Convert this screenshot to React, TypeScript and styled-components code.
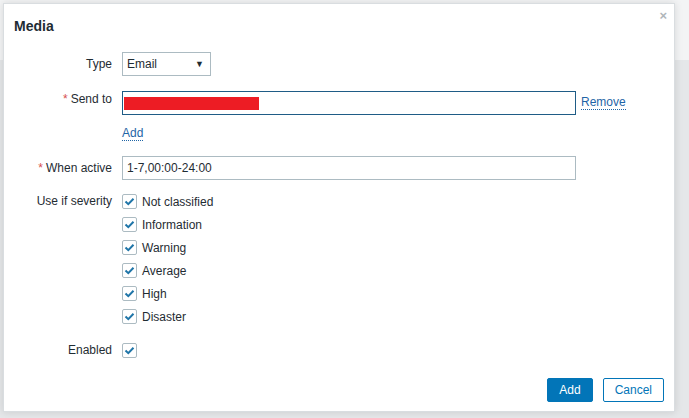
import React from "react"
import styled, { createGlobalStyle } from "styled-components"

const GlobalStyle = createGlobalStyle`
  html, body {
    margin: 0;
    padding: 0;
  }
  body {
    width: 689px;
    height: 418px;
    overflow: hidden;
    font-family: "Liberation Sans", Arial, sans-serif;
    font-size: 12px;
    color: #1f2c33;
    background: linear-gradient(#f3f4f5 0, #f3f4f5 60px, #e5e7e9 60px);
  }
`

const severities = [
  "Not classified",
  "Information",
  "Warning",
  "Average",
  "High",
  "Disaster",
]

const Page = styled.div`
  padding: 3px 0 0 3px;
`

const Dialog = styled.div`
  box-sizing: border-box;
  width: 672px;
  height: 409px;
  background: #fff;
  border: 1px solid #d9dde0;
  box-shadow: 0 0 8px rgba(0, 0, 0, 0.12);
  display: flex;
  flex-direction: column;
`

const Header = styled.div`
  display: flex;
  justify-content: space-between;
  align-items: flex-start;
  padding: 13px 10px 0 10px;
  height: 48px;
  box-sizing: border-box;
`

const Title = styled.h4`
  margin: 0;
  font-size: 14px;
  font-weight: bold;
  color: #1f2c33;
  line-height: 18px;
`

const Close = styled.span`
  color: #b0b6ba;
  font-size: 13px;
  line-height: 10px;
  margin-top: -6px;
  margin-right: -3px;
  font-weight: bold;
`

const Form = styled.div`
  flex: 1;
  padding: 0 10px;
`

const Row = styled.div<{ $gap?: number }>`
  display: grid;
  grid-template-columns: 98px 1fr;
  column-gap: 10px;
  margin-top: ${p => p.$gap ?? 0}px;
`

const Label = styled.div<{ $pad?: number }>`
  text-align: right;
  padding-top: ${p => p.$pad ?? 5}px;
  line-height: 14px;
  white-space: nowrap;
`

const Star = styled.span`
  color: #d64e4e;
  margin-right: 3px;
`

const Field = styled.div`
  display: flex;
  align-items: center;
`

const LinkField = styled(Field)`
  height: 24px;
`

const Select = styled.div`
  box-sizing: border-box;
  width: 89px;
  height: 24px;
  border: 1px solid #acbbc2;
  display: flex;
  align-items: center;
  justify-content: space-between;
  padding: 0 6px 0 4px;
  font-size: 12px;
`

const Arrow = styled.span`
  font-size: 9px;
  color: #1f2c33;
`

const Input = styled.div<{ $focus?: boolean }>`
  box-sizing: border-box;
  width: 454px;
  height: 24px;
  border: 1px solid ${p => (p.$focus ? "#1f5c86" : "#acbbc2")};
  padding: 0 4px;
  display: flex;
  align-items: center;
`

const Redact = styled.div`
  width: 135px;
  height: 13px;
  background: #ed1c24;
  margin-left: -3px;
  margin-top: 1px;
`

const Link = styled.span`
  color: #1f65a6;
  border-bottom: 1px dotted #1f65a6;
  line-height: 13px;
`

const RemoveLink = styled(Link)`
  margin-left: 5px;
`

const CheckList = styled.div`
  display: flex;
  flex-direction: column;
`

const CheckRow = styled.div`
  display: flex;
  align-items: center;
  height: 23px;
`

const Box = styled.span`
  box-sizing: border-box;
  width: 15px;
  height: 15px;
  border: 1px solid #acbbc2;
  border-radius: 2px;
  display: inline-flex;
  align-items: center;
  justify-content: center;
  margin-right: 5px;
  background: #fff;
`

const Footer = styled.div`
  display: flex;
  justify-content: flex-end;
  gap: 10px;
  padding: 0 10px 9px 0;
`

const Button = styled.button<{ $alt?: boolean }>`
  box-sizing: border-box;
  height: 24px;
  padding: 0 11px;
  font-family: "Liberation Sans", Arial, sans-serif;
  font-size: 12px;
  border-radius: 2px;
  border: 1px solid #0275b8;
  background: ${p => (p.$alt ? "#fff" : "#0275b8")};
  color: ${p => (p.$alt ? "#0275b8" : "#fff")};
`

const Check = () => (
  <Box>
    <svg width="11" height="9" viewBox="0 0 11 9">
      <path d="M1.5 4.5 L4.3 7.2 L9.5 1.8" fill="none" stroke="#1f75a8" strokeWidth="2" />
    </svg>
  </Box>
)

const App = () => {
  return (
    <Page>
      <GlobalStyle />
      <Dialog>
        <Header>
          <Title>Media</Title>
          <Close>×</Close>
        </Header>
        <Form>
          <Row>
            <Label>Type</Label>
            <Field>
              <Select>
                Email
                <Arrow>▼</Arrow>
              </Select>
            </Field>
          </Row>
          <Row $gap={15}>
            <Label $pad={1}>
              <Star>*</Star>Send to
            </Label>
            <Field>
              <Input $focus>
                <Redact />
              </Input>
              <RemoveLink>Remove</RemoveLink>
            </Field>
          </Row>
          <Row $gap={7}>
            <span />
            <LinkField>
              <Link>Add</Link>
            </LinkField>
          </Row>
          <Row $gap={10}>
            <Label>
              <Star>*</Star>When active
            </Label>
            <Field>
              <Input>1-7,00:00-24:00</Input>
            </Field>
          </Row>
          <Row $gap={10}>
            <Label $pad={4}>Use if severity</Label>
            <CheckList>
              {severities.map(s => (
                <CheckRow key={s}>
                  <Check />
                  {s}
                </CheckRow>
              ))}
            </CheckList>
          </Row>
          <Row $gap={11}>
            <Label $pad={4}>Enabled</Label>
            <CheckList>
              <CheckRow>
                <Check />
              </CheckRow>
            </CheckList>
          </Row>
        </Form>
        <Footer>
          <Button>Add</Button>
          <Button $alt>Cancel</Button>
        </Footer>
      </Dialog>
    </Page>
  )
}

export default App
